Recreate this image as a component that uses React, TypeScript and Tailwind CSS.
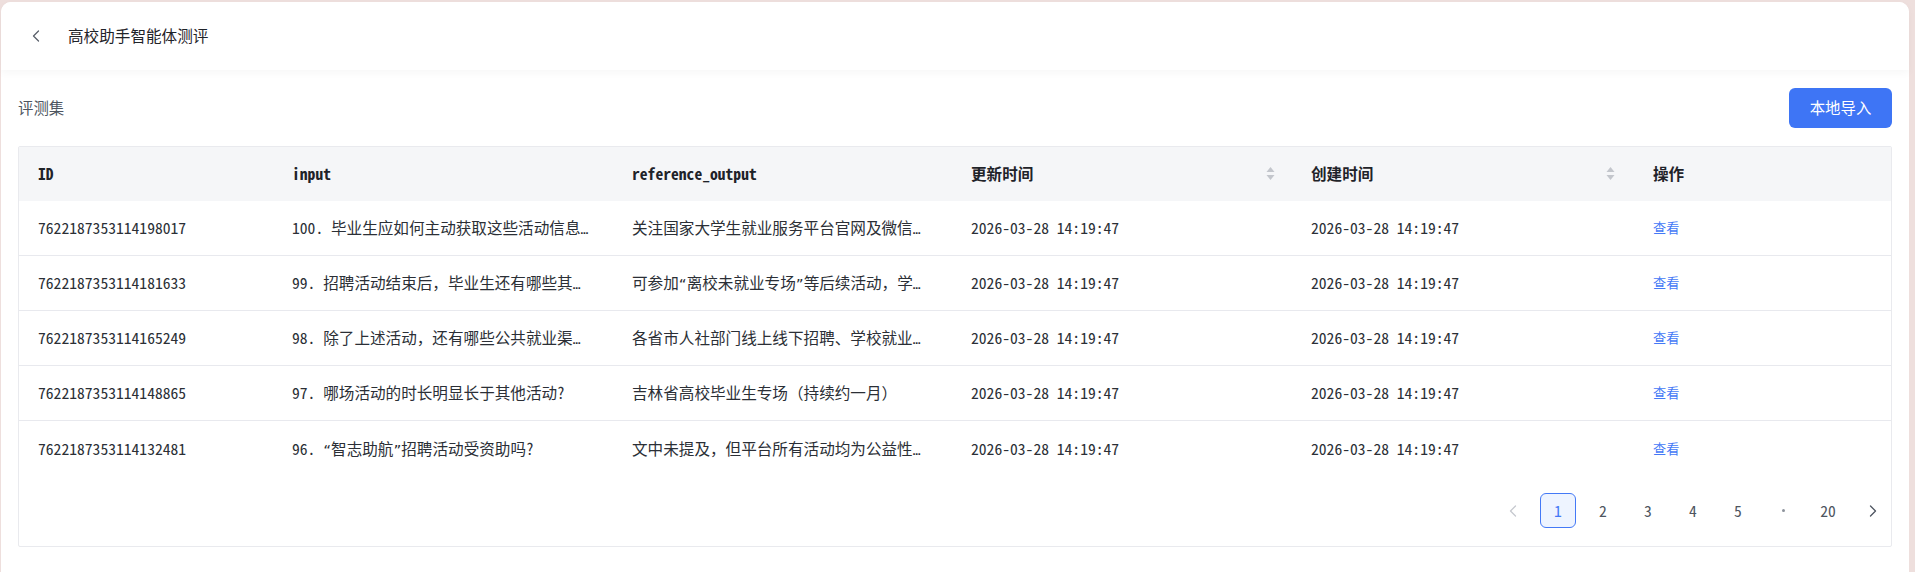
import React from "react";

const rows = [
  { id: "7622187353114198017", input: "100. 毕业生应如何主动获取这些活动信息", inputEll: true, ref: "关注国家大学生就业服务平台官网及微信", refEll: true },
  { id: "7622187353114181633", input: "99. 招聘活动结束后，毕业生还有哪些其", inputEll: true, ref: "可参加“离校未就业专场”等后续活动，学", refEll: true },
  { id: "7622187353114165249", input: "98. 除了上述活动，还有哪些公共就业渠", inputEll: true, ref: "各省市人社部门线上线下招聘、学校就业", refEll: true },
  { id: "7622187353114148865", input: "97. 哪场活动的时长明显长于其他活动?", inputEll: false, ref: "吉林省高校毕业生专场（持续约一月）", refEll: false },
  { id: "7622187353114132481", input: "96. “智志助航”招聘活动受资助吗?", inputEll: false, ref: "文中未提及，但平台所有活动均为公益性", refEll: true },
];

const Narrow = ({ ch }: { ch: string }) => (
  <span className="font-['DejaVu_Sans_Mono',monospace] text-[13px]">{ch}</span>
);

const Txt = ({ s }: { s: string }) => {
  const parts = s.split(/([“”])/);
  return (
    <>
      {parts.map((p, i) =>
        p === "“" || p === "”" ? <Narrow key={i} ch={p} /> : <React.Fragment key={i}>{p}</React.Fragment>
      )}
    </>
  );
};

const SortIcon = () => (
  <svg width="9" height="15" viewBox="0 0 9 15" className="shrink-0">
    <polygon points="4.5,1 8.5,6 0.5,6" fill="#c3c6cc" />
    <polygon points="0.5,9 8.5,9 4.5,14" fill="#c3c6cc" />
  </svg>
);

const Chevron = ({ dir, color }: { dir: "left" | "right"; color: string }) => (
  <svg width="8" height="12" viewBox="0 0 8 12">
    <path
      d={dir === "left" ? "M6.5 1 L1.5 6 L6.5 11" : "M1.5 1 L6.5 6 L1.5 11"}
      fill="none"
      stroke={color}
      strokeWidth="1.3"
      strokeLinecap="round"
      strokeLinejoin="round"
    />
  </svg>
);

const cols = "grid grid-cols-[254px_340px_339px_340px_342px_1fr]";

export default function App() {
  return (
    <div className="h-[572px] w-full overflow-hidden bg-[#eedfdd] pt-[2px] pl-[1px] pr-[6px] font-['Noto_Sans_CJK_SC',sans-serif]">
      <div className="h-full rounded-t-[10px] bg-white flex flex-col">
        {/* header bar */}
        <div className="h-[68px] shrink-0 flex items-center rounded-t-[10px] bg-white shadow-[0_3px_8px_rgba(0,0,0,0.035)] relative z-10">
          <div className="w-[67px] flex items-center justify-center pl-[3px]">
            <Chevron dir="left" color="#5a606b" />
          </div>
          <span className="text-[15.6px] text-[#1f2329] leading-none">高校助手智能体测评</span>
        </div>

        {/* content */}
        <div className="flex-1 px-[17px] pt-[18px]">
          <div className="flex items-center justify-between h-[40px]">
            <span className="text-[15.4px] text-[#4e5560]">评测集</span>
            <button className="w-[103px] h-[40px] rounded-[6px] bg-[#3e75f5] text-white text-[15.4px]">
              本地导入
            </button>
          </div>

          <div className="mt-[18px] border border-[#e9eaee] rounded-[2px] font-['Noto_Sans_Mono_CJK_SC','Noto_Sans_CJK_SC',monospace] text-[15.6px]">
            {/* table header */}
            <div className={`${cols} h-[54px] bg-[#f5f6f8] items-center font-bold text-[#1f2329]`}>
              <div className="px-[19px]">ID</div>
              <div className="px-[19px]">input</div>
              <div className="px-[19px]">reference_output</div>
              <div className="pl-[19px] pr-[17px] flex items-center justify-between">
                <span>更新时间</span>
                <SortIcon />
              </div>
              <div className="pl-[19px] pr-[19px] flex items-center justify-between">
                <span>创建时间</span>
                <SortIcon />
              </div>
              <div className="px-[19px]">操作</div>
            </div>

            {rows.map((r, i) => (
              <div
                key={r.id}
                className={`${cols} h-[55px] items-center text-[#2b2f36] ${i < rows.length - 1 ? "border-b border-[#e8e9ee]" : ""}`}
              >
                <div className="px-[19px] whitespace-nowrap">{r.id}</div>
                <div className="px-[19px] whitespace-nowrap overflow-hidden">
                  <Txt s={r.input} />
                  {r.inputEll && <Narrow ch="…" />}
                </div>
                <div className="px-[19px] whitespace-nowrap overflow-hidden">
                  <Txt s={r.ref} />
                  {r.refEll && <Narrow ch="…" />}
                </div>
                <div className="px-[19px] whitespace-nowrap">2026-03-28 14:19:47</div>
                <div className="px-[19px] whitespace-nowrap">2026-03-28 14:19:47</div>
                <div className="px-[19px] font-['Noto_Sans_CJK_SC',sans-serif] text-[13.2px] text-[#4479f6]">查看</div>
              </div>
            ))}

            {/* pagination */}
            <div className="flex justify-end items-center gap-[9px] pt-[17px] pb-[18px] text-[15.6px] text-[#4e5560]">
              <div className="w-[36px] h-[35px] flex items-center justify-center">
                <Chevron dir="left" color="#c6c9cf" />
              </div>
              <div className="w-[36px] h-[35px] flex items-center justify-center rounded-[6px] border border-[#4479f6] bg-[#eef4ff] text-[#4479f6]">
                1
              </div>
              {["2", "3", "4", "5"].map((n) => (
                <div key={n} className="w-[36px] h-[35px] flex items-center justify-center">
                  {n}
                </div>
              ))}
              <div className="w-[36px] h-[35px] flex items-center justify-center">
                <span className="w-[3px] h-[3px] rounded-full bg-[#8d939c]" />
              </div>
              <div className="w-[36px] h-[35px] flex items-center justify-center">20</div>
              <div className="w-[36px] h-[35px] flex items-center justify-center">
                <Chevron dir="right" color="#4e5560" />
              </div>
            </div>
          </div>
        </div>
      </div>
    </div>
  );
}
